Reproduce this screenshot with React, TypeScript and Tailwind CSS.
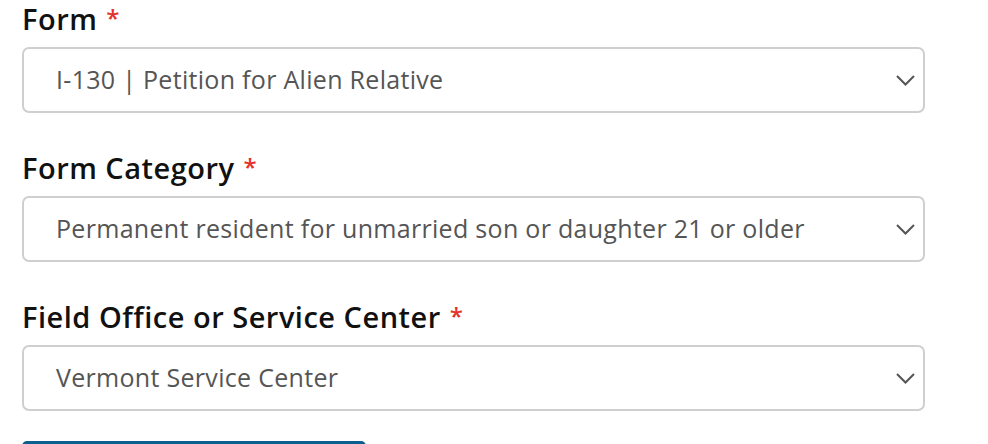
import React from 'react';

const fields = [
  { label: 'Form', value: 'I-130 | Petition for Alien Relative' },
  { label: 'Form Category', value: 'Permanent resident for unmarried son or daughter 21 or older' },
  { label: 'Field Office or Service Center', value: 'Vermont Service Center' },
];

function Chevron() {
  return (
    <svg width="19" height="11" viewBox="0 0 19 11" fill="none" className="text-[#555]">
      <polyline points="1,1 9.5,9.5 18,1" stroke="currentColor" strokeWidth="2" />
    </svg>
  );
}

function SelectField({ label, value }: { label: string; value: string }) {
  return (
    <div className="flex flex-col">
      <label className="flex h-[36px] items-start text-[29px] leading-[36px] font-semibold tracking-[0.5px] text-[#111]">
        {label}
        <span className="ml-[9px] mt-[3px] text-[24px] leading-[28px] text-[#e5302c]">*</span>
      </label>
      <div className="mt-[10px] flex h-[66px] items-center justify-between rounded-[7px] border-2 border-[#cfcfcf] bg-white pl-[32px] pr-[8px]">
        <span className="text-[25px] tracking-[0.3px] text-[#555]">{value}</span>
        <Chevron />
      </div>
    </div>
  );
}

export default function App() {
  return (
    <div className="h-[444px] w-[988px] overflow-hidden bg-white pl-[22px] pt-[1px] font-['Open_Sans',sans-serif]">
      <div className="flex w-[903px] flex-col gap-[37px]">
        {fields.map((f) => (
          <SelectField key={f.label} label={f.label} value={f.value} />
        ))}
      </div>
      {/* Submit button, cut off by the frame */}
      <div className="mt-[30px] h-[40px] w-[344px] rounded-[5px] bg-[#0b5f8f]" />
    </div>
  );
}
